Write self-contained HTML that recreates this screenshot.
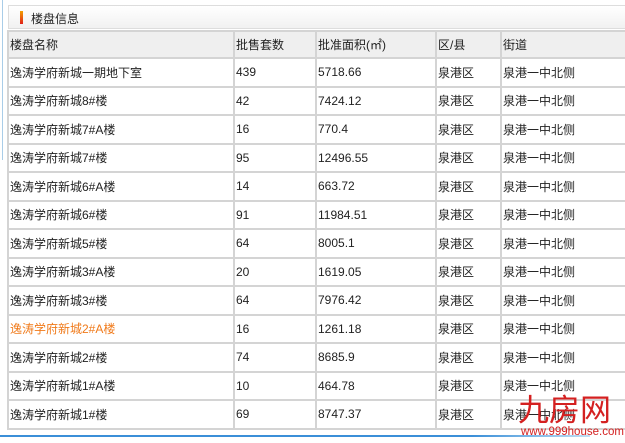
<!DOCTYPE html><html><head><meta charset="utf-8"><style>
body{margin:0;width:625px;height:443px;background:#fff;position:relative;overflow:hidden;font-family:"Liberation Sans","Noto Sans CJK SC",sans-serif;font-size:12px;color:#222}
.lb{position:absolute;left:2px;top:0;width:1px;height:160px;background:#a9cde8}
.title{position:absolute;left:8px;top:5px;width:620px;height:24px;border:1px solid #ddd;border-right:none;background:linear-gradient(#fff,#f1f1f1);box-sizing:border-box}
.title i{position:absolute;left:11px;top:5px;width:3px;height:13px;background:linear-gradient(#f3a000,#e0201a)}
.title span{position:absolute;left:22px;top:4px;font-size:12px}
table{position:absolute;left:7px;top:30px;border-collapse:collapse;width:620px;table-layout:fixed}
td{border:2px solid #d4d4d4;padding:0 0 0 1px;height:26.5px;white-space:nowrap;overflow:hidden}
tr.h td{background:#efefef;height:25px}
.o td:first-child{color:#f07a1a}
.bl{position:absolute;left:0;top:435px;width:590px;height:2px;background:linear-gradient(90deg,#3b8fd8,#3b8fd8 80%,#bfe0f5)}
.logo{position:absolute;left:518px;top:391px;color:#d42020;font-size:31px;font-weight:normal;letter-spacing:0px;font-family:"Noto Sans CJK SC",sans-serif;line-height:34px}
.url{position:absolute;left:521px;top:426px;color:#d42020;font-size:11.5px}
</style></head><body>
<div class="lb"></div>
<div class="title"><i></i><span>楼盘信息</span></div>
<table>
<colgroup><col style="width:226px"><col style="width:82px"><col style="width:120px"><col style="width:65px"><col></colgroup>
<tr class="h"><td>楼盘名称</td><td>批售套数</td><td>批准面积(㎡)</td><td>区/县</td><td>街道</td></tr>
<tr><td>逸涛学府新城一期地下室</td><td>439</td><td>5718.66</td><td>泉港区</td><td>泉港一中北侧</td></tr>
<tr><td>逸涛学府新城8#楼</td><td>42</td><td>7424.12</td><td>泉港区</td><td>泉港一中北侧</td></tr>
<tr><td>逸涛学府新城7#A楼</td><td>16</td><td>770.4</td><td>泉港区</td><td>泉港一中北侧</td></tr>
<tr><td>逸涛学府新城7#楼</td><td>95</td><td>12496.55</td><td>泉港区</td><td>泉港一中北侧</td></tr>
<tr><td>逸涛学府新城6#A楼</td><td>14</td><td>663.72</td><td>泉港区</td><td>泉港一中北侧</td></tr>
<tr><td>逸涛学府新城6#楼</td><td>91</td><td>11984.51</td><td>泉港区</td><td>泉港一中北侧</td></tr>
<tr><td>逸涛学府新城5#楼</td><td>64</td><td>8005.1</td><td>泉港区</td><td>泉港一中北侧</td></tr>
<tr><td>逸涛学府新城3#A楼</td><td>20</td><td>1619.05</td><td>泉港区</td><td>泉港一中北侧</td></tr>
<tr><td>逸涛学府新城3#楼</td><td>64</td><td>7976.42</td><td>泉港区</td><td>泉港一中北侧</td></tr>
<tr class="o"><td>逸涛学府新城2#A楼</td><td>16</td><td>1261.18</td><td>泉港区</td><td>泉港一中北侧</td></tr>
<tr><td>逸涛学府新城2#楼</td><td>74</td><td>8685.9</td><td>泉港区</td><td>泉港一中北侧</td></tr>
<tr><td>逸涛学府新城1#A楼</td><td>10</td><td>464.78</td><td>泉港区</td><td>泉港一中北侧</td></tr>
<tr><td>逸涛学府新城1#楼</td><td>69</td><td>8747.37</td><td>泉港区</td><td>泉港一中北侧</td></tr>
</table>
<div class="bl"></div>
<div class="logo">九房网</div>
<div class="url">www.999house.com</div>
</body></html>
